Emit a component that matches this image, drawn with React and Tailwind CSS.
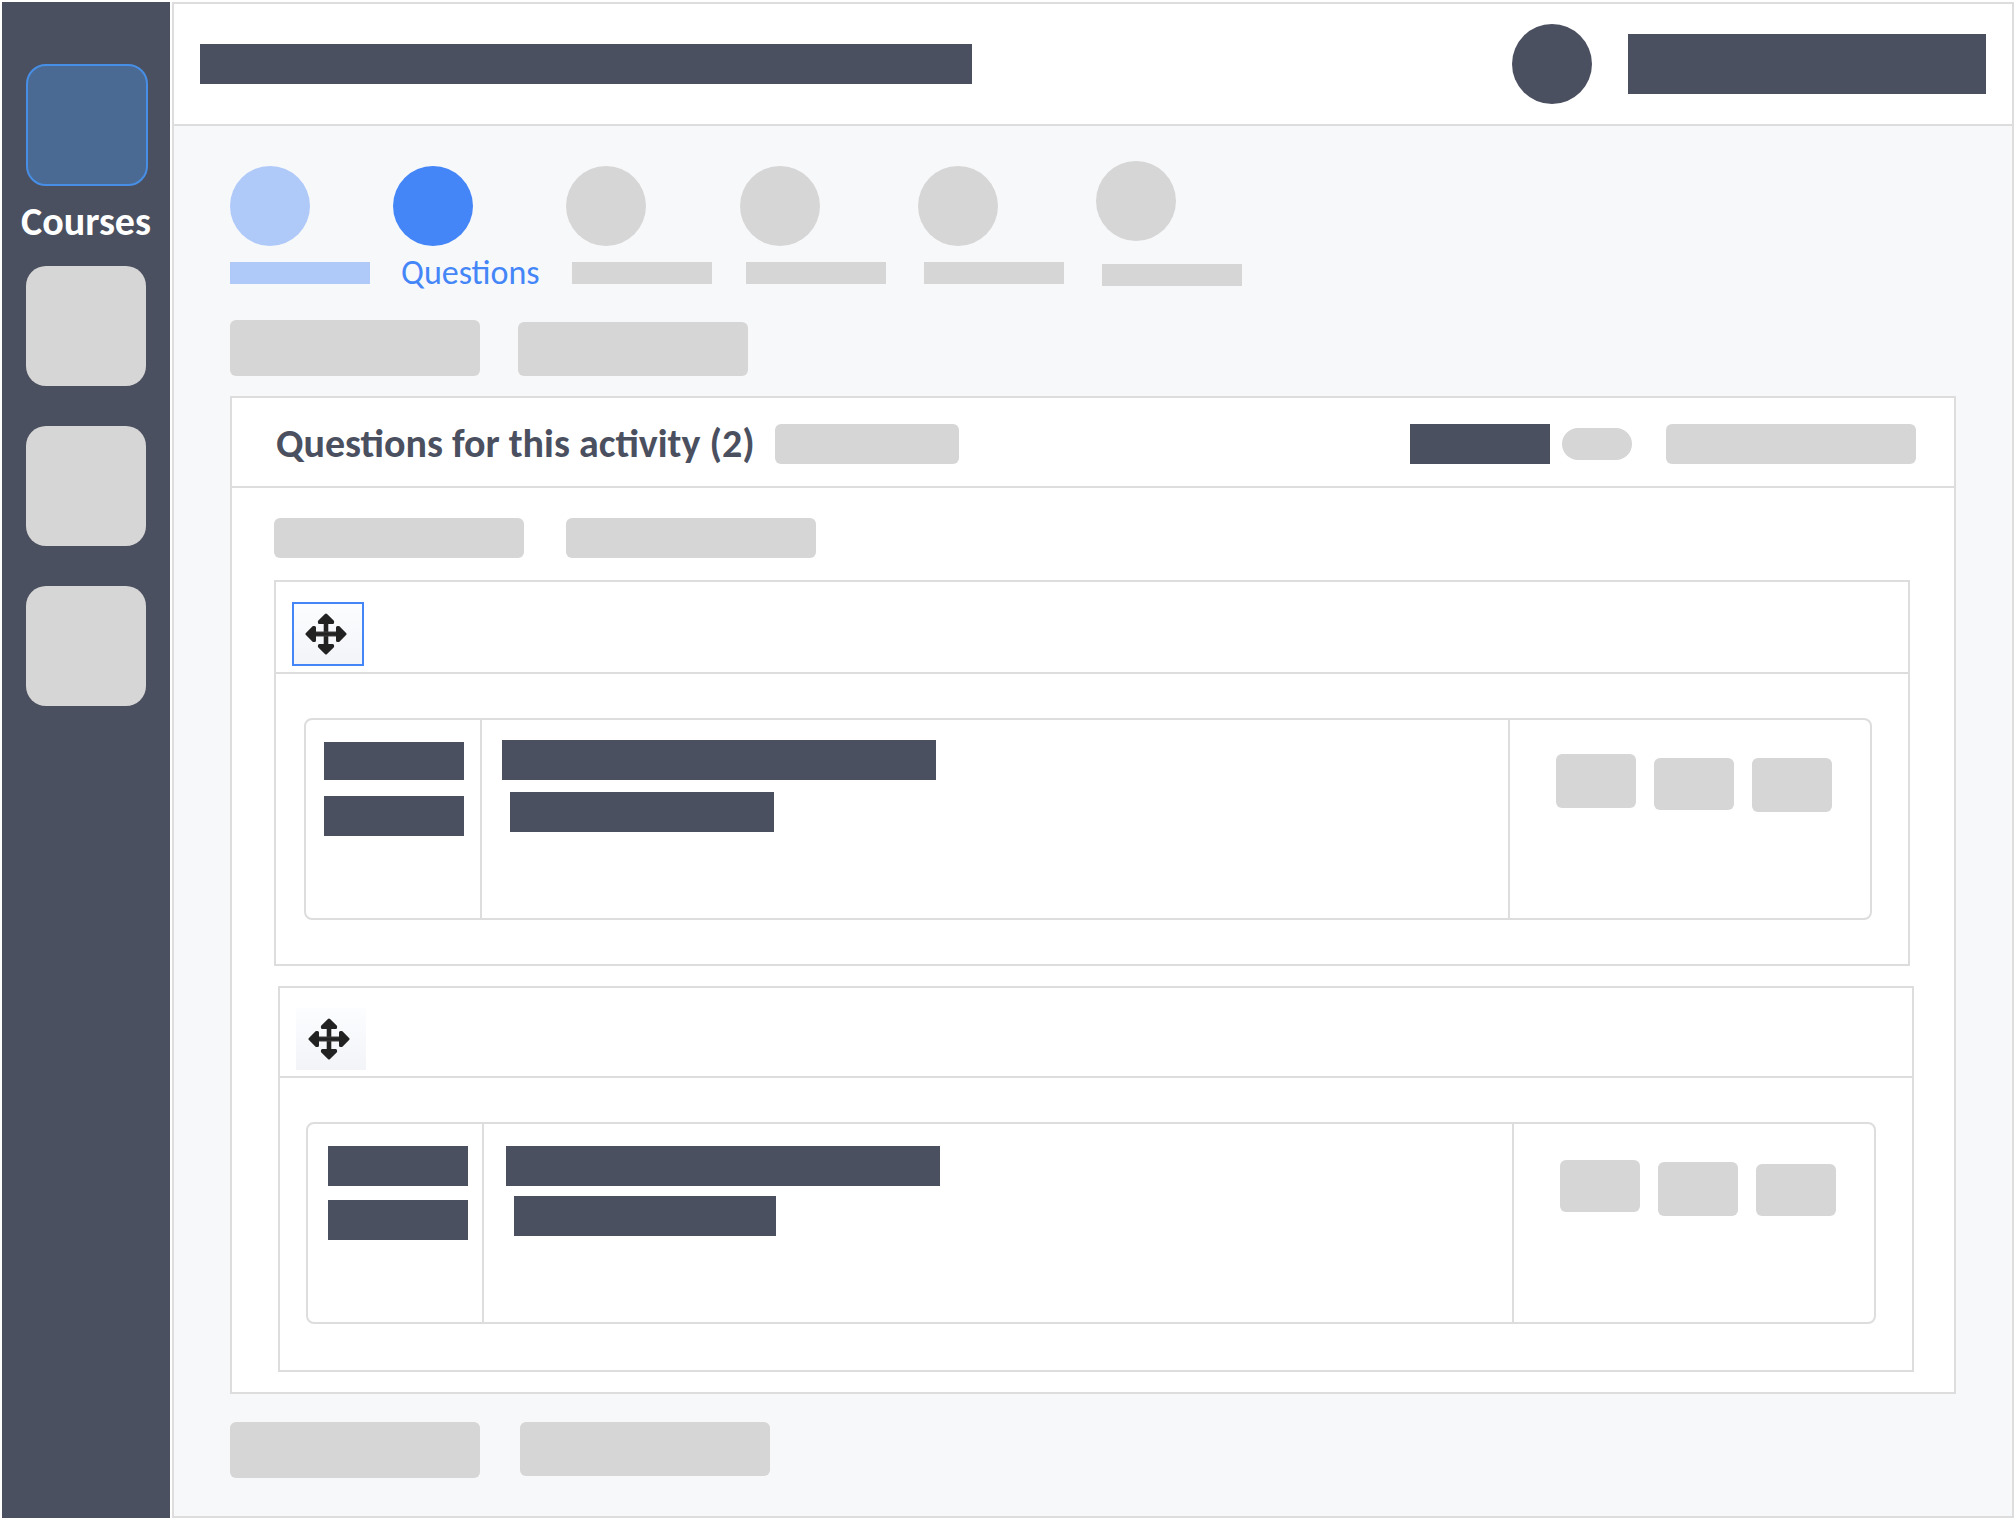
import clsx from 'clsx'

const steps = [
    { label: 'Setup', circle: 'bg-[#afc9f9]', bar: 'bg-[#afc9f9]', first: true },
    { label: 'Questions', circle: 'bg-[#4486f8]', current: true },
    { label: 'Step 3', circle: 'bg-[#d6d6d6]', bar: 'bg-[#d6d6d6]' },
    { label: 'Step 4', circle: 'bg-[#d6d6d6]', bar: 'bg-[#d6d6d6]' },
    { label: 'Step 5', circle: 'bg-[#d6d6d6]', bar: 'bg-[#d6d6d6]' },
    { label: 'Step 6', circle: 'bg-[#d6d6d6]', bar: 'bg-[#d6d6d6]', tall: true },
]

const questions = [
    {
        id: 1,
        selected: true,
        card: 'mr-1',
        handle: 'w-[72px] h-16 border-2 border-[#4486f8]',
        body: 'pl-7 pr-9 py-11',
        meta: 'pl-[18px] gap-4',
        metaBars: ['h-[38px]', 'h-10'],
        text: 'pl-5 pt-5 gap-3',
        textBars: ['w-[434px]', 'w-[264px]'],
        actions: ['mt-[34px] h-[54px]', 'mt-[38px] h-[52px]', 'mt-[38px] h-[54px]'],
    },
    {
        id: 2,
        selected: false,
        card: 'ml-1',
        handle: 'w-[70px] h-[62px]',
        body: 'pl-[26px] pr-9 pt-11 pb-[46px]',
        meta: 'pl-5 gap-[14px]',
        metaBars: ['h-10', 'h-10'],
        text: 'pl-[22px] pt-[22px] gap-[10px]',
        textBars: ['w-[434px]', 'w-[262px]'],
        actions: ['mt-9 h-[52px]', 'mt-[38px] h-[54px]', 'mt-10 h-[52px]'],
    },
]

const Block = ({ className }) => <div className={clsx('bg-[#4b5060]', className)} />

const GreyButton = ({ label, className }) => (
    <button type="button" aria-label={label} className={clsx('bg-[#d6d6d6] rounded-md', className)} />
)

const MoveIcon = () => (
    <svg viewBox="0 0 42 42" className="w-[42px] h-[42px]" aria-hidden="true">
        <path d="M21 8V34" stroke="#222" strokeWidth="4.6" />
        <path d="M8 21H34" stroke="#3c3c3c" strokeWidth="5" />
        <path d="M8 21H34" stroke="#222" strokeWidth="3" />
        <g fill="#222" stroke="#222" strokeWidth="3" strokeLinejoin="round">
            <path d="M21 2L27.6 8.6V9.5H14.4V8.6Z" />
            <path d="M21 40L27.6 33.4V32.5H14.4V33.4Z" />
            <path d="M2 21L8.6 14.4H9.5V27.6H8.6Z" />
            <path d="M40 21L33.4 14.4H32.5V27.6H33.4Z" />
        </g>
    </svg>
)

const Sidebar = () => (
    <nav className="w-[168px] shrink-0 bg-[#4b5060] pt-[62px] flex flex-col">
        <button
            type="button"
            aria-labelledby="nav-courses"
            className="ml-6 w-[122px] h-[122px] rounded-[20px] bg-[#4a6a94] border-2 border-[#478fe6]"
        />
        <span
            id="nav-courses"
            className="h-20 pb-2 flex items-center justify-center text-[40px] leading-10 font-bold text-white"
        >
            Courses
        </span>
        <div className="ml-6 flex flex-col gap-10">
            <button type="button" aria-label="Section 2" className="w-[120px] h-[120px] rounded-[20px] bg-[#d6d6d6]" />
            <button type="button" aria-label="Section 3" className="w-[120px] h-[120px] rounded-[20px] bg-[#d6d6d6]" />
            <button type="button" aria-label="Section 4" className="w-[120px] h-[120px] rounded-[20px] bg-[#d6d6d6]" />
        </div>
    </nav>
)

const Header = () => (
    <header className="bg-white border-b-2 border-[#dddddd] px-[26px] py-5 flex items-center justify-between gap-9">
        <Block className="w-[772px] h-10" />
        <div className="flex items-center gap-9">
            <Block className="w-20 h-20 rounded-full shrink-0" />
            <Block className="w-[358px] h-[60px]" />
        </div>
    </header>
)

const Stepper = () => (
    <ol className="grid grid-cols-[163px_173px_174px_178px_178px_146px]">
        {steps.map((step) => (
            <li
                key={step.label}
                className={clsx('flex flex-col', step.tall ? 'gap-[23px]' : 'pt-[5px] gap-4')}
                aria-current={step.current ? 'step' : undefined}
            >
                <div className={clsx('w-20 h-20 rounded-full', step.circle)} />
                {step.current ? (
                    <span className="pl-2 h-[22px] flex items-center text-[34px] leading-10 text-[#4486f8]">
                        {step.label}
                    </span>
                ) : (
                    <div className={clsx('w-[140px] h-[22px]', step.bar, !step.first && 'ml-[6px]')} />
                )}
            </li>
        ))}
    </ol>
)

const QuestionCard = ({ question }) => (
    <article className={clsx('border-2 border-[#dddddd]', question.card)}>
        <div className="border-b-2 border-[#dddddd] pt-5 pb-[6px] px-4">
            <button
                type="button"
                aria-label="Move question"
                aria-pressed={question.selected}
                className={clsx(
                    'flex items-center justify-center pr-1 bg-linear-to-b from-[#fcfdff] to-[#f3f4f7]',
                    question.handle
                )}
            >
                <MoveIcon />
            </button>
        </div>
        <div className={question.body}>
            <div className="min-h-[202px] border-2 border-[#dddddd] rounded-lg grid grid-cols-[176px_1fr_362px]">
                <div className={clsx('flex flex-col pt-[22px] border-r-2 border-[#dddddd]', question.meta)}>
                    {question.metaBars.map((bar, i) => (
                        <Block key={i} className={clsx('w-[140px]', bar)} />
                    ))}
                </div>
                <div className={clsx('flex flex-col', question.text)}>
                    <Block className={clsx('h-10', question.textBars[0])} />
                    <Block className={clsx('h-10 ml-2', question.textBars[1])} />
                </div>
                <div className="flex items-start gap-[18px] pl-[46px] border-l-2 border-[#dddddd]">
                    {question.actions.map((action, i) => (
                        <GreyButton key={i} label={`Question action ${i + 1}`} className={clsx('w-20', action)} />
                    ))}
                </div>
            </div>
        </div>
    </article>
)

const App = () => {
    return (
        <div className="min-h-screen bg-white p-[2px] flex gap-[2px] font-[Calibri,Carlito,Lato,sans-serif]">
            <Sidebar />
            <div className="flex-1 min-w-0 border-2 border-[#dddddd] bg-[#f7f8fa]">
                <Header />
                <main className="px-14 pt-[35px] pb-9">
                    <Stepper />

                    <div className="mt-[34px] flex items-end gap-[38px]">
                        <GreyButton label="Add question" className="w-[250px] h-14" />
                        <GreyButton label="Import" className="w-[230px] h-[54px]" />
                    </div>

                    <section className="mt-5 bg-white border-2 border-[#dddddd]">
                        <div className="border-b-2 border-[#dddddd] pt-[26px] pb-[22px] pl-11 pr-[38px] flex items-center justify-between">
                            <div className="flex items-center gap-5">
                                <h2 className="text-[40px] leading-10 font-bold text-[#4b5060] whitespace-nowrap">
                                    Questions for this activity ({questions.length})
                                </h2>
                                <GreyButton label="Edit" className="w-[184px] h-10" />
                            </div>
                            <div className="flex items-center">
                                <Block className="w-[140px] h-10" />
                                <button
                                    type="button"
                                    role="switch"
                                    aria-checked="false"
                                    aria-label="Shuffle"
                                    className="ml-3 w-[70px] h-8 rounded-full bg-[#d6d6d6]"
                                />
                                <GreyButton label="Options" className="ml-[34px] w-[250px] h-10" />
                            </div>
                        </div>

                        <div className="pl-[42px] pr-10 pt-[30px] pb-5">
                            <div className="flex gap-[42px]">
                                <GreyButton label="Expand all" className="w-[250px] h-10" />
                                <GreyButton label="Collapse all" className="w-[250px] h-10" />
                            </div>
                            <div className="mt-[22px] flex flex-col gap-5">
                                {questions.map((question) => (
                                    <QuestionCard key={question.id} question={question} />
                                ))}
                            </div>
                        </div>
                    </section>

                    <div className="mt-7 flex items-start gap-10">
                        <GreyButton label="Back" className="w-[250px] h-14" />
                        <GreyButton label="Next" className="w-[250px] h-[54px]" />
                    </div>
                </main>
            </div>
        </div>
    )
}

export default App
